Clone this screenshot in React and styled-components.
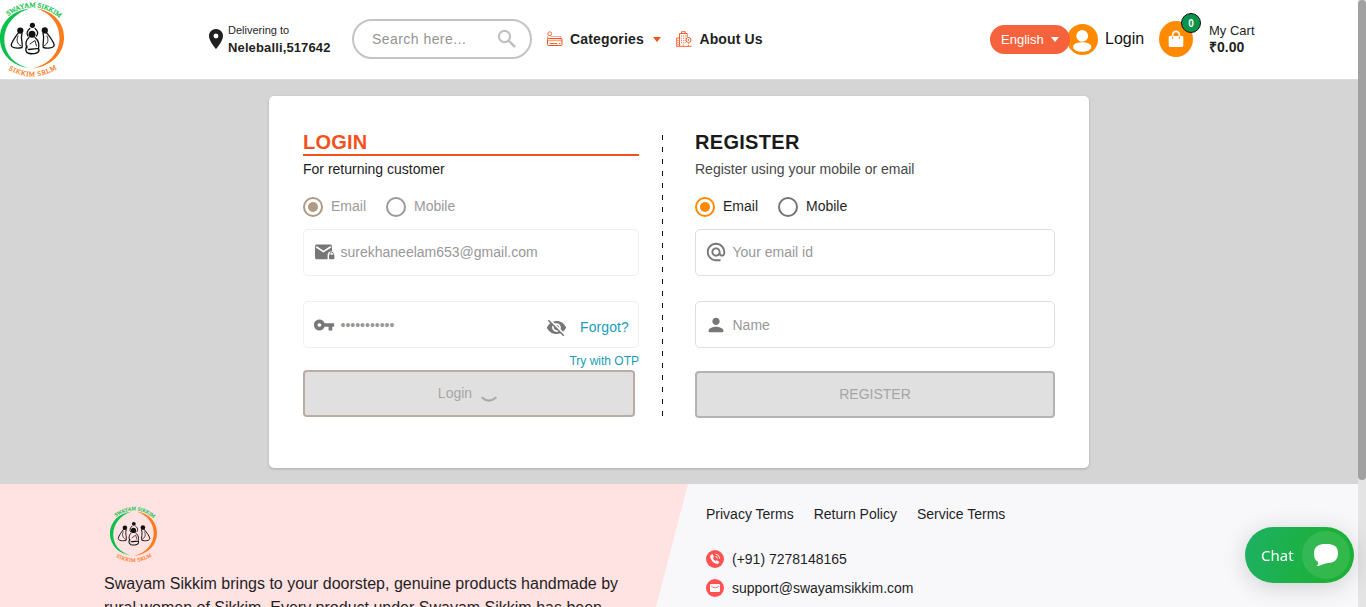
import React from "react";
import styled, { createGlobalStyle } from "styled-components";
import {
  MdLocationOn,
  MdVpnKey,
  MdVisibilityOff,
  MdAlternateEmail,
  MdPerson,
} from "react-icons/md";

const GlobalStyle = createGlobalStyle`
  * { box-sizing: border-box; }
  body {
    margin: 0;
    overflow: hidden;
    font-family: "Liberation Sans", Arial, sans-serif;
    font-size: 14px;
    color: #1f1f1f;
  }
  svg { display: block; flex: none; }
`;

const Page = styled.div`
  display: flex;
  height: 607px;
  overflow: hidden;
`;

const Content = styled.div`
  flex: 1;
  min-width: 0;
  display: flex;
  flex-direction: column;
  background: #d5d5d5;
`;

const ScrollTrack = styled.div`
  width: 8px;
  flex: none;
  background: #e4e4e4;
`;

const ScrollThumb = styled.div`
  height: 480px;
  border-radius: 4px;
  background: #a1a1a1;
`;

const Header = styled.header`
  height: 80px;
  flex: none;
  display: flex;
  align-items: center;
  padding-bottom: 1px;
  background: #fff;
  border-bottom: 1px solid #dcdcdc;
`;

const HeaderItem = styled.div`
  display: flex;
  align-items: center;
  flex: none;
  width: ${(p) => p.$width}px;
  margin-left: ${(p) => p.$gap || 0}px;
  white-space: nowrap;
`;

const Stack = styled.div`
  display: flex;
  flex-direction: column;
  margin-left: ${(p) => p.$gap}px;
`;

const SmallLine = styled.span`
  font-size: ${(p) => p.$size}px;
  line-height: ${(p) => p.$line || 17}px;
  letter-spacing: ${(p) => p.$spacing || 0}px;
`;

const StrongLine = styled(SmallLine)`
  font-weight: 700;
`;

const SearchBox = styled(HeaderItem)`
  height: 40px;
  justify-content: space-between;
  padding: 0 11px 0 18px;
  border: 2px solid #c4c4c4;
  border-radius: 20px;
  color: #949494;
  letter-spacing: 0.45px;
  svg { color: #c0c0c0; }
`;

const NavText = styled.span`
  font-weight: 700;
  letter-spacing: ${(p) => p.$spacing}px;
  margin-left: ${(p) => p.$gap}px;
`;

const Caret = styled.i`
  border: 4px solid transparent;
  border-top: 5px solid ${(p) => p.$color};
  border-bottom: 0;
  margin-left: ${(p) => p.$gap}px;
`;

const LanguagePill = styled(HeaderItem)`
  height: 29px;
  padding-left: 11px;
  border-radius: 15px;
  background: #f6623c;
  color: #fff;
  font-size: 13px;
  z-index: 1;
`;

const LoginText = styled.span`
  font-size: 16px;
  margin-left: 7px;
  color: #111;
`;

const CartDisc = styled.div`
  position: relative;
  width: 34px;
  height: 36px;
  display: flex;
  align-items: center;
  justify-content: center;
  border-radius: 50%;
  background: #ff8a00;
  color: #fff;
`;

const CartBadge = styled.span`
  position: absolute;
  top: -8px;
  right: -8px;
  width: 20px;
  height: 20px;
  border: 1px solid #111;
  border-radius: 50%;
  background: #0a934b;
  font: 700 10px/19px "Liberation Sans", sans-serif;
  text-align: center;
`;

const Main = styled.main`
  height: 404px;
  flex: none;
  display: flex;
  justify-content: center;
  padding-top: 16px;
`;

const Card = styled.section`
  width: 820px;
  height: 372px;
  display: flex;
  padding: 34px;
  border-radius: 5px;
  background: #fff;
  box-shadow: 0 1px 3px rgba(0, 0, 0, 0.2);
`;

const Column = styled.div`
  width: ${(p) => p.$width}px;
  display: flex;
  flex-direction: column;
`;

const Divider = styled.div`
  width: 1px;
  height: 281px;
  margin: 5px 32px 0 23px;
  background: repeating-linear-gradient(#111 0 5px, transparent 5px 12px);
`;

const Heading = styled.h2`
  height: 26px;
  margin: 0;
  font-size: 20px;
  line-height: 24px;
  letter-spacing: ${(p) => p.$spacing}px;
  color: ${(p) => (p.$active ? "#f4511e" : "#1a1a1a")};
  border-bottom: 2px solid ${(p) => (p.$active ? "#f4511e" : "transparent")};
`;

const Subtitle = styled.p`
  margin: 5px 0 0;
  line-height: 16px;
  color: ${(p) => (p.$muted ? "#474747" : "#1c1c1c")};
`;

const RadioGroup = styled.div`
  display: flex;
  align-items: center;
  height: 20px;
  margin: 20px 0 12px;
  color: ${(p) => (p.$disabled ? "#9a9a9a" : "#1f1f1f")};
`;

const Radio = styled.span`
  width: 20px;
  height: 20px;
  margin-right: 8px;
  display: flex;
  align-items: center;
  justify-content: center;
  border: 2px solid ${(p) => p.$color};
  border-radius: 50%;
  &::after {
    content: "";
    width: 10px;
    height: 10px;
    border-radius: 50%;
    background: ${(p) => (p.$on ? p.$color : "transparent")};
  }
`;

const RadioLabel = styled.label`
  margin-right: 20px;
  line-height: 16px;
  padding-bottom: 2px;
`;

const Field = styled.div`
  height: 47px;
  display: flex;
  align-items: center;
  padding: 0 9px ${(p) => (p.$low ? 0 : 2)}px 9px;
  margin-bottom: ${(p) => p.$after}px;
  border: 1px solid ${(p) => (p.$disabled ? "#efefef" : "#dedede")};
  border-radius: 5px;
  color: #989898;
  svg { color: #777; }
`;

const FieldText = styled.span`
  flex: 1;
  margin-left: 5.5px;
`;

const ForgotLink = styled.a`
  margin-left: 13px;
  padding-top: 5px;
  color: #1a9cb7;
  letter-spacing: 0.1px;
`;

const EyeSlot = styled.span`
  padding-top: 5px;
`;

const OtpLink = styled.a`
  align-self: flex-end;
  height: 17px;
  font-size: 12px;
  line-height: 16px;
  color: #1a9cb7;
`;

const SubmitButton = styled.button`
  width: ${(p) => p.$width}px;
  height: 47px;
  display: flex;
  align-items: center;
  justify-content: center;
  gap: 8px;
  padding: 0 ${(p) => p.$shift || 0}px 1px 0;
  border: 2px solid ${(p) => p.$edge};
  border-radius: 4px;
  background: #e0e0e0;
  color: #a6a6a6;
  font: 14px "Liberation Sans", sans-serif;
`;

const Footer = styled.footer`
  flex: 1;
  display: flex;
  background: #f8f8fb;
`;

const About = styled.div`
  width: 688px;
  height: 123px;
  padding: 21px 0 0 104px;
  background: #ffe2e2;
  clip-path: polygon(0 0, 100% 0, 656px 100%, 0 100%);
`;

const AboutText = styled.p`
  width: 530px;
  margin: 9px 0 0;
  font-size: 16px;
  line-height: 24px;
  white-space: nowrap;
`;

const LogoSlot = styled.div`
  padding-left: 6px;
`;

const Contact = styled.div`
  padding: 22px 0 0 18px;
`;

const Links = styled.nav`
  display: flex;
  gap: 20px;
  line-height: 16px;
  margin-bottom: 28px;
`;

const ContactRow = styled.div`
  height: 18px;
  display: flex;
  align-items: center;
  gap: 8px;
  margin-bottom: 11px;
  line-height: 16px;
`;

const ContactIcon = styled.span`
  width: 18px;
  height: 18px;
  display: flex;
  align-items: center;
  justify-content: center;
  border-radius: 50%;
  background: #ff5252;
  color: #fff;
`;

const ChatButton = styled.div`
  position: fixed;
  right: 12px;
  bottom: 24px;
  width: 109px;
  height: 56px;
  display: flex;
  align-items: center;
  justify-content: space-between;
  padding: 0 4px 0 16px;
  border-radius: 28px;
  background: linear-gradient(100deg, #1db164, #1cb038 75%);
  box-shadow: 0 4px 24px rgba(0, 0, 0, 0.16);
  color: #fff;
  font: 15px "Noto Sans", "Open Sans", sans-serif;
`;

const ChatDisc = styled.span`
  width: 48px;
  height: 48px;
  display: flex;
  align-items: center;
  justify-content: center;
  border-radius: 50%;
  background: rgba(255, 255, 255, 0.1);
`;

function Logo({ width, height, id }) {
  return (
    <svg width={width} height={height} viewBox="0 0 64 78" preserveAspectRatio="none">
      <defs>
        <path id={`${id}-top`} d="M8 16 Q34 -2.5 59 17.5" />
        <path id={`${id}-bottom`} d="M8.5 69.5 Q33 83.5 56.5 69" />
      </defs>
      <path d="M30 8.6 C-10 13 -10 63 29 68 C-5 60 -3 18 30 8.6Z" fill="#0cc04a" />
      <path d="M36 8.6 C74 13 74 64 32 68.6 C69 60 67 17 36 8.6Z" fill="#ff7a1c" />
      <g fontFamily="Liberation Serif" fontWeight="400" fontSize="6.8">
        <text fill="#0cc04a" stroke="#0cc04a" strokeWidth=".25"><textPath href={`#${id}-top`} textLength="56">SWAYAM SIKKIM</textPath></text>
        <text fill="#ff7a1c" stroke="#ff7a1c" strokeWidth=".25"><textPath href={`#${id}-bottom`} textLength="51">SIKKIM SRLM</textPath></text>
      </g>
      <g fill="#111">
        <circle cx="32.4" cy="25.3" r="2.6" />
        <circle cx="20.3" cy="30.6" r="3.1" />
        <circle cx="44.8" cy="30.4" r="3.1" />
        <circle cx="32" cy="34.2" r="3.5" />
      </g>
      <g fill="none" stroke="#111" strokeWidth="1.3" strokeLinecap="round" strokeLinejoin="round">
        <path d="M19 32 C16 36 12 41 11.2 45 C11.5 48.5 18 48.5 22 47.5 C23.5 44 20 39 22 33" />
        <path d="M18 36 C16 40 17 44 21 46" strokeWidth=".9" />
        <path d="M46 32 C49 36 53.5 41 54.2 45 C54 48.5 47 48.5 43.3 47.5 C42 44 45 39 43 33" />
        <path d="M47 36 C49 40 48 44 44 46" strokeWidth=".9" />
        <path d="M29.8 28.5 C27 31 26.5 34 28 36 M35 28.5 C38 31 38.5 34 36.5 36" />
        <path d="M29 37.5 C25 41 25.5 45 27 48 M35 37.5 C39.5 41 39 45 38.5 49" />
        <path d="M27 46 C25 49 25.5 52 28.5 53.3 C33 54.5 39 53.5 39 50 C39 47.5 36 49 28.5 49.5" strokeWidth="1.4" />
        <path d="M30 44 L35 40.5 L36.5 46" strokeWidth=".9" />
      </g>
    </svg>
  );
}

const SearchIcon = () => (
  <svg width="24" height="24" viewBox="0 0 24 24" fill="none" stroke="currentColor">
    <circle cx="9.5" cy="9.5" r="5.6" strokeWidth="2.1" />
    <path d="M13.8 13.8L20 20" strokeWidth="2.5" />
  </svg>
);

const CategoriesIcon = () => (
  <svg width="16" height="16" viewBox="0 0 16 16" fill="none" stroke="#f4511e" strokeWidth="1">
    <circle cx="2.7" cy="2.7" r="1.9" strokeWidth=".9" />
    <path d="M.7 7.5V5.5" strokeWidth=".8" />
    <path d="M3.5 5.5H14V7.5" opacity=".5" />
    <rect x=".5" y="7.5" width="14.5" height="7" rx=".8" />
    <path d="M1 9.5H15" opacity=".5" strokeWidth="1.6" />
    <path d="M2.5 12.5H10.5M12 12.5H13.5" opacity=".85" />
  </svg>
);

const BuildingIcon = () => (
  <svg width="16" height="16" viewBox="0 0 16 16" fill="none" stroke="#f4511e" strokeWidth=".9">
    <path d="M5.5 2.5V.7H9.2V2.5M3.5 15V2.5H11.2V6M.7 15V7H3.5M0 15.3H15.5" />
    <circle cx="12.5" cy="9" r="2.5" />
    <circle cx="12.5" cy="9" r=".4" />
    <path d="M12.5 11.6V15M5.5 4.5V13M7.4 4.5V15M9.3 4.5V13" strokeDasharray="1.2 1" opacity=".8" />
    <path d="M2 9V14" strokeDasharray="1 1" />
  </svg>
);

const AvatarIcon = () => (
  <svg width="31" height="31" viewBox="0 0 31 31">
    <circle cx="15.5" cy="15.5" r="15.5" fill="#ff8a00" />
    <circle cx="15.2" cy="11.9" r="5.9" fill="#fff" />
    <ellipse cx="15.2" cy="23" rx="9.2" ry="4.8" fill="#fff" />
  </svg>
);

const BagIcon = () => (
  <svg width="16" height="18" viewBox="0 0 16 18">
    <path d="M1.8 6H14.2Q15.3 6 15.3 7.1V15.6Q15.3 17 13.9 17H2.1Q.7 17 .7 15.6V7.1Q.7 6 1.8 6Z" fill="#fff" />
    <path d="M4.6 8V4.8a3.4 3.4 0 0 1 6.8 0V8" fill="none" stroke="#fff" strokeWidth="1.7" />
    <path d="M4.6 7.2V8.2M11.4 7.2V8.2" stroke="#ff8a00" strokeWidth="1.2" strokeLinecap="round" />
  </svg>
);

const MailLockIcon = () => (
  <svg width="22" height="20" viewBox="0 0 22 20">
    <path d="M3.5 2.5H17.2Q19 2.5 19 4.3V9.2Q14.6 9.4 14.6 13V17.3H3.5Q2 17.3 2 15.5V4.3Q2 2.5 3.5 2.5Z" fill="currentColor" />
    <path d="M3.2 4.8 L10.4 9.6 L17.8 4.8" fill="none" stroke="#fff" strokeWidth="1.7" />
    <rect x="16" y="12.7" width="5.4" height="4.6" rx=".8" fill="currentColor" />
    <path d="M17.1 13V11.7a1.6 1.6 0 0 1 3.2 0V13" fill="none" stroke="currentColor" strokeWidth="1" />
  </svg>
);

const PhoneIcon = () => (
  <svg width="12" height="12" viewBox="0 0 12 12">
    <path d="M2.1 1.7L3.7 1.2L5 4.1L3.8 5.1Q4.5 7 6.5 8.1L7.7 7.2L10.3 8.8L9.4 10.6Q8.6 11.3 6.8 10.6Q2.5 9 1.3 4.2Q1 2.3 2.1 1.7Z" fill="#fff" />
    <path d="M6.4 3.4Q8.3 3.6 8.5 5.6M6.6 1.2Q10.5 1.5 10.7 5.6" fill="none" stroke="#fff" strokeWidth=".9" />
  </svg>
);

const EnvelopeIcon = () => (
  <svg width="10" height="10" viewBox="0 0 10 10">
    <rect x="0" y="1" width="10" height="8" rx="1" fill="#fff" />
    <path d="M1 2.8 Q5 7 9 2.8" fill="none" stroke="#ff5252" strokeWidth=".8" />
  </svg>
);

const SpinnerArc = () => (
  <svg width="18" height="18" viewBox="0 0 18 18">
    <path d="M1.7 13.3 Q9 20 16.3 13.3" fill="none" stroke="#a9a9a9" strokeWidth="2.2" />
  </svg>
);

const ChatIcon = () => (
  <svg width="24" height="22" viewBox="0 0 24 22">
    <path d="M12 0C20 0 24 2.5 24 9.3S20 19 12.5 19.2C9.5 19.3 8 21.8 2.6 22C4.3 20.6 4.3 19.2 3.8 17.7C1 16.3 0 13.5 0 9.5C0 2.5 4 0 12 0Z" fill="#fff" />
  </svg>
);

function RadioPair({ disabled }) {
  return (
    <RadioGroup $disabled={disabled}>
      <Radio $on $color={disabled ? "#b09a82" : "#ff8a00"} />
      <RadioLabel>Email</RadioLabel>
      <Radio $color={disabled ? "#999" : "#757575"} />
      <RadioLabel>Mobile</RadioLabel>
    </RadioGroup>
  );
}

export default function App() {
  return (
    <Page>
      <GlobalStyle />
      <Content>
        <Header>
          <HeaderItem $width={64}>
            <Logo width={64} height={78} id="header-logo" />
          </HeaderItem>
          <HeaderItem $gap={140} $width={130}>
            <MdLocationOn size={24} />
            <Stack $gap={0}>
              <SmallLine $size={11}>Delivering to</SmallLine>
              <StrongLine $size={13} $spacing={0.13} $line={18}>Neleballi,517642</StrongLine>
            </Stack>
          </HeaderItem>
          <SearchBox $gap={18} $width={180}>
            Search here...
            <SearchIcon />
          </SearchBox>
          <HeaderItem $gap={15} $width={119}>
            <CategoriesIcon />
            <NavText $gap={7} $spacing={0.15}>Categories</NavText>
            <Caret $color="#f4511e" $gap={9} />
          </HeaderItem>
          <HeaderItem $gap={10} $width={94}>
            <BuildingIcon />
            <NavText $gap={7.4} $spacing={0.15}>About Us</NavText>
          </HeaderItem>
          <LanguagePill $gap={220} $width={80}>
            English
            <Caret $color="#fff" $gap={7} />
          </LanguagePill>
          <HeaderItem $gap={-3} $width={80}>
            <AvatarIcon />
            <LoginText>Login</LoginText>
          </HeaderItem>
          <HeaderItem $gap={12} $width={110}>
            <CartDisc>
              <BagIcon />
              <CartBadge>0</CartBadge>
            </CartDisc>
            <Stack $gap={16}>
              <SmallLine $size={13}>My Cart</SmallLine>
              <StrongLine $size={14}>₹0.00</StrongLine>
            </Stack>
          </HeaderItem>
        </Header>

        <Main>
          <Card>
            <Column $width={336}>
              <Heading $active $spacing={0.2}>LOGIN</Heading>
              <Subtitle>For returning customer</Subtitle>
              <RadioPair disabled />
              <Field $disabled $after={25}>
                <MailLockIcon />
                <FieldText>surekhaneelam653@gmail.com</FieldText>
              </Field>
              <Field $disabled $low $after={5}>
                <MdVpnKey size={22} />
                <FieldText>•••••••••••</FieldText>
                <EyeSlot><MdVisibilityOff size={21} /></EyeSlot>
                <ForgotLink>Forgot?</ForgotLink>
              </Field>
              <OtpLink>Try with OTP</OtpLink>
              <SubmitButton $width={332} $edge="#bcaaa4" $shift={2}>
                Login
                <SpinnerArc />
              </SubmitButton>
            </Column>
            <Divider />
            <Column $width={360}>
              <Heading $spacing={0.3}>REGISTER</Heading>
              <Subtitle $muted>Register using your mobile or email</Subtitle>
              <RadioPair />
              <Field $after={25}>
                <MdAlternateEmail size={22} />
                <FieldText>Your email id</FieldText>
              </Field>
              <Field $low $after={23}>
                <MdPerson size={22} />
                <FieldText>Name</FieldText>
              </Field>
              <SubmitButton $width={360} $edge="#b3b3b3">REGISTER</SubmitButton>
            </Column>
          </Card>
        </Main>

        <Footer>
          <About>
            <LogoSlot>
              <Logo width={47} height={58} id="footer-logo" />
            </LogoSlot>
            <AboutText>
              Swayam Sikkim brings to your doorstep, genuine products handmade by
              <br />
              rural women of Sikkim. Every product under Swayam Sikkim has been
            </AboutText>
          </About>
          <Contact>
            <Links>
              <span>Privacy Terms</span>
              <span>Return Policy</span>
              <span>Service Terms</span>
            </Links>
            <ContactRow>
              <ContactIcon><PhoneIcon /></ContactIcon>
              (+91) 7278148165
            </ContactRow>
            <ContactRow>
              <ContactIcon><EnvelopeIcon /></ContactIcon>
              support@swayamsikkim.com
            </ContactRow>
          </Contact>
        </Footer>
      </Content>
      <ScrollTrack>
        <ScrollThumb />
      </ScrollTrack>
      <ChatButton>
        Chat
        <ChatDisc><ChatIcon /></ChatDisc>
      </ChatButton>
    </Page>
  );
}
